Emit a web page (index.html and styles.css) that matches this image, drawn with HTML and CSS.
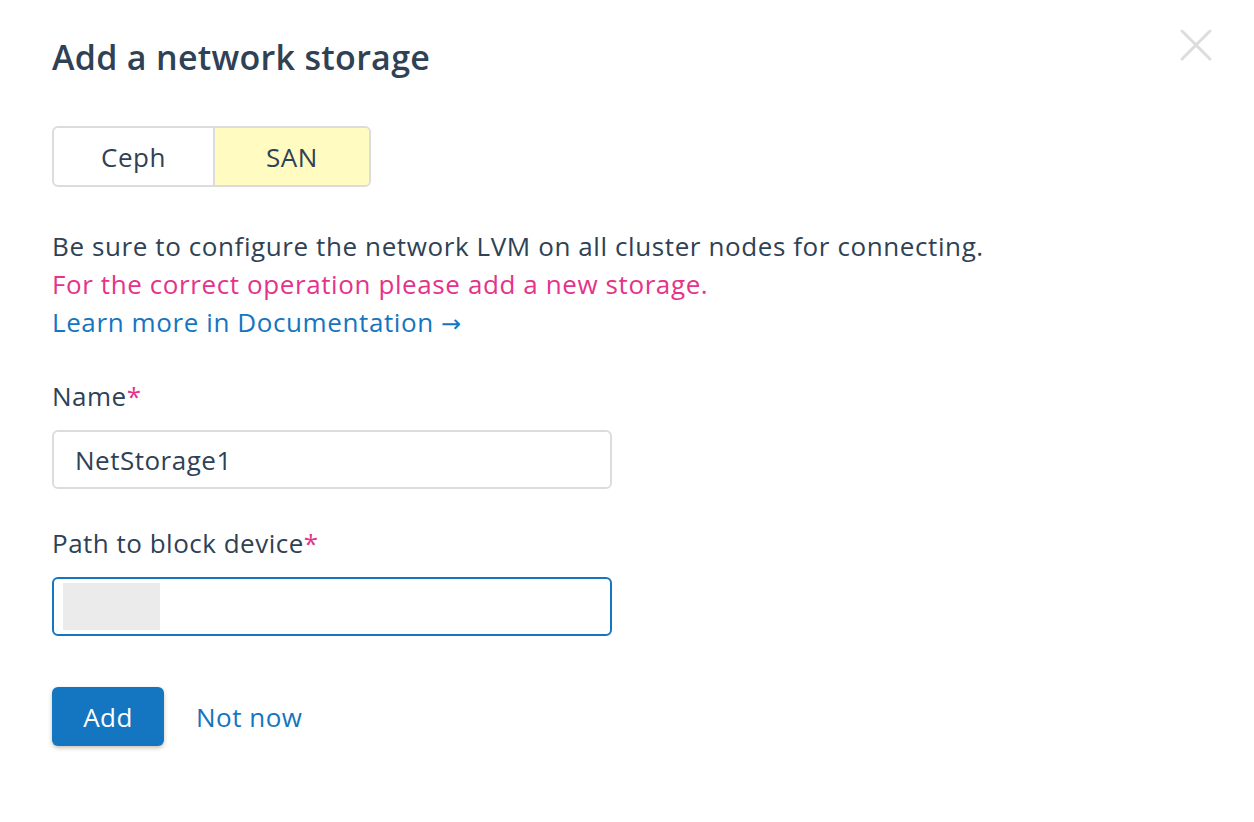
FILE: index.html
```html
<!DOCTYPE html>
<html>
<head>
<meta charset="utf-8">
<link rel="stylesheet" href="styles.css">
</head>
<body>
<div class="dialog">
  <button class="close" aria-label="Close">
    <svg width="34" height="34" viewBox="0 0 34 34"><path d="M3 3 L31 31 M31 3 L3 31" stroke="#dcdcdc" stroke-width="3" stroke-linecap="round"/></svg>
  </button>
  <h1 class="title">Add a network storage</h1>
  <div class="segmented">
    <div class="seg">Ceph</div>
    <div class="seg seg-active">SAN</div>
  </div>
  <div class="info">
    <p class="line">Be sure to configure the network LVM on all cluster nodes for connecting.</p>
    <p class="line warn">For the correct operation please add a new storage.</p>
    <p class="line"><a class="link" href="#">Learn more in Documentation <span class="arrow">→</span></a></p>
  </div>
  <div class="field">
    <label class="label">Name<span class="req">*</span></label>
    <div class="input">NetStorage1</div>
  </div>
  <div class="field">
    <label class="label">Path to block device<span class="req">*</span></label>
    <div class="input input-focus"><span class="placeholder"></span></div>
  </div>
  <div class="actions">
    <button class="btn-primary">Add</button>
    <a class="btn-link" href="#">Not now</a>
  </div>
</div>
</body>
</html>
```
FILE: styles.css
```css
html, body {
  margin: 0;
  padding: 0;
  background: #ffffff;
}
body {
  font-family: "Open Sans", "Noto Sans", "Liberation Sans", sans-serif;
  color: #2f4155;
}
.dialog {
  position: relative;
  padding: 30px 52px;
}
.close {
  position: absolute;
  top: 28px;
  right: 41px;
  width: 34px;
  height: 34px;
  padding: 0;
  border: 0;
  background: transparent;
}
.title {
  margin: 0;
  font-size: 34px;
  font-weight: 600;
  line-height: 54px;
  letter-spacing: 0.3px;
  color: #2f4155;
}
.segmented {
  display: flex;
  width: 319px;
  height: 61px;
  margin-top: 42px;
  box-sizing: border-box;
  border: 2px solid #dcdcdc;
  border-radius: 6px;
  overflow: hidden;
}
.seg {
  flex: 0 0 159px;
  display: flex;
  align-items: center;
  justify-content: center;
  font-size: 26px;
  letter-spacing: 0.5px;
  color: #2f4155;
}
.seg-active {
  flex: 1;
  background: #fffbc1;
  border-left: 2px solid #dcdcdc;
}
.info {
  margin-top: 40px;
}
.line {
  margin: 0;
  font-size: 26px;
  line-height: 38px;
  letter-spacing: 0.6px;
}
.warn {
  color: #e5338a;
}
.link {
  color: #1475c0;
  text-decoration: none;
}
.arrow {
  font-family: "DejaVu Sans", sans-serif;
  font-size: 24px;
}
.field {
  margin-top: 33px;
}
.field + .field {
  margin-top: 34px;
}
.label {
  display: block;
  font-size: 26px;
  line-height: 40px;
  letter-spacing: 0.5px;
}
.req {
  color: #e5338a;
}
.input {
  margin-top: 14px;
  width: 560px;
  height: 59px;
  box-sizing: border-box;
  border: 2px solid #dcdcdc;
  border-radius: 6px;
  padding: 0 21px;
  display: flex;
  align-items: center;
  font-size: 26px;
  letter-spacing: 0.5px;
}
.input-focus {
  border-color: #1475c0;
  padding: 4px 9px;
  align-items: stretch;
}
.placeholder {
  width: 97px;
  background: #ebebeb;
}
.actions {
  display: flex;
  align-items: center;
  gap: 32px;
  margin-top: 51px;
}
.btn-primary {
  width: 112px;
  height: 59px;
  border: 0;
  border-radius: 6px;
  background: #1475c0;
  color: #ffffff;
  font-family: inherit;
  font-size: 26px;
  font-weight: 500;
  letter-spacing: 0.4px;
  box-shadow: 0 2px 4px rgba(90, 80, 40, 0.35);
}
.btn-link {
  color: #1475c0;
  text-decoration: none;
  font-size: 26px;
  letter-spacing: 0.5px;
}
```
